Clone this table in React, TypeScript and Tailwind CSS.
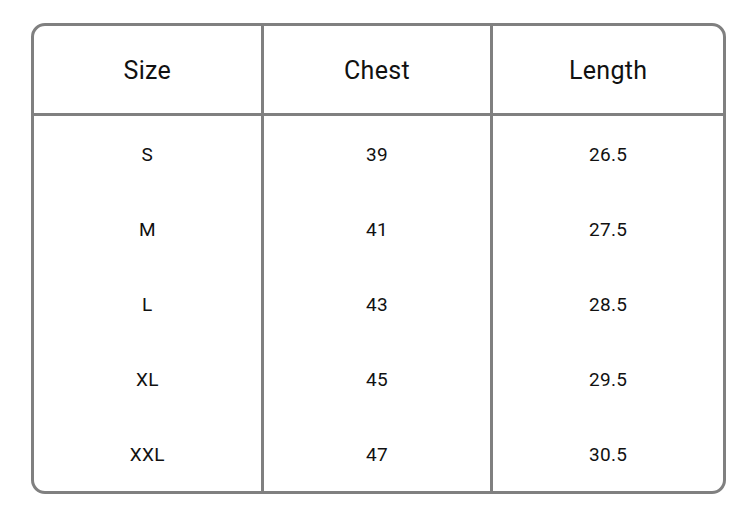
const rows = [
  ["S", "39", "26.5"],
  ["M", "41", "27.5"],
  ["L", "43", "28.5"],
  ["XL", "45", "29.5"],
  ["XXL", "47", "30.5"],
];

const headers = ["Size", "Chest", "Length"];

export default function App() {
  return (
    <div
      className="min-h-screen bg-white pl-[31px] pt-[23px]"
      style={{ fontFamily: "Roboto, 'Liberation Sans', sans-serif" }}
    >
      <div className="w-[695px] h-[471px] border-[3px] border-[#808080] rounded-[14px] overflow-hidden text-[#111]">
        <div className="grid grid-cols-3 border-b-[3px] border-[#808080]">
          {headers.map((h, i) => (
            <div
              key={h}
              className={`h-[87px] flex items-center justify-center text-[25px] tracking-[0.3px] pt-[3px] ${
                i < 2 ? "border-r-[3px] border-[#808080]" : ""
              }`}
            >
              {h}
            </div>
          ))}
        </div>
        {rows.map((r) => (
          <div key={r[0]} className="grid grid-cols-3">
            {r.map((c, i) => (
              <div
                key={i}
                className={`h-[75px] flex items-center justify-center text-[19px] tracking-[0.3px] pt-[4px] ${
                  i < 2 ? "border-r-[3px] border-[#808080]" : ""
                }`}
              >
                {c}
              </div>
            ))}
          </div>
        ))}
      </div>
    </div>
  );
}
